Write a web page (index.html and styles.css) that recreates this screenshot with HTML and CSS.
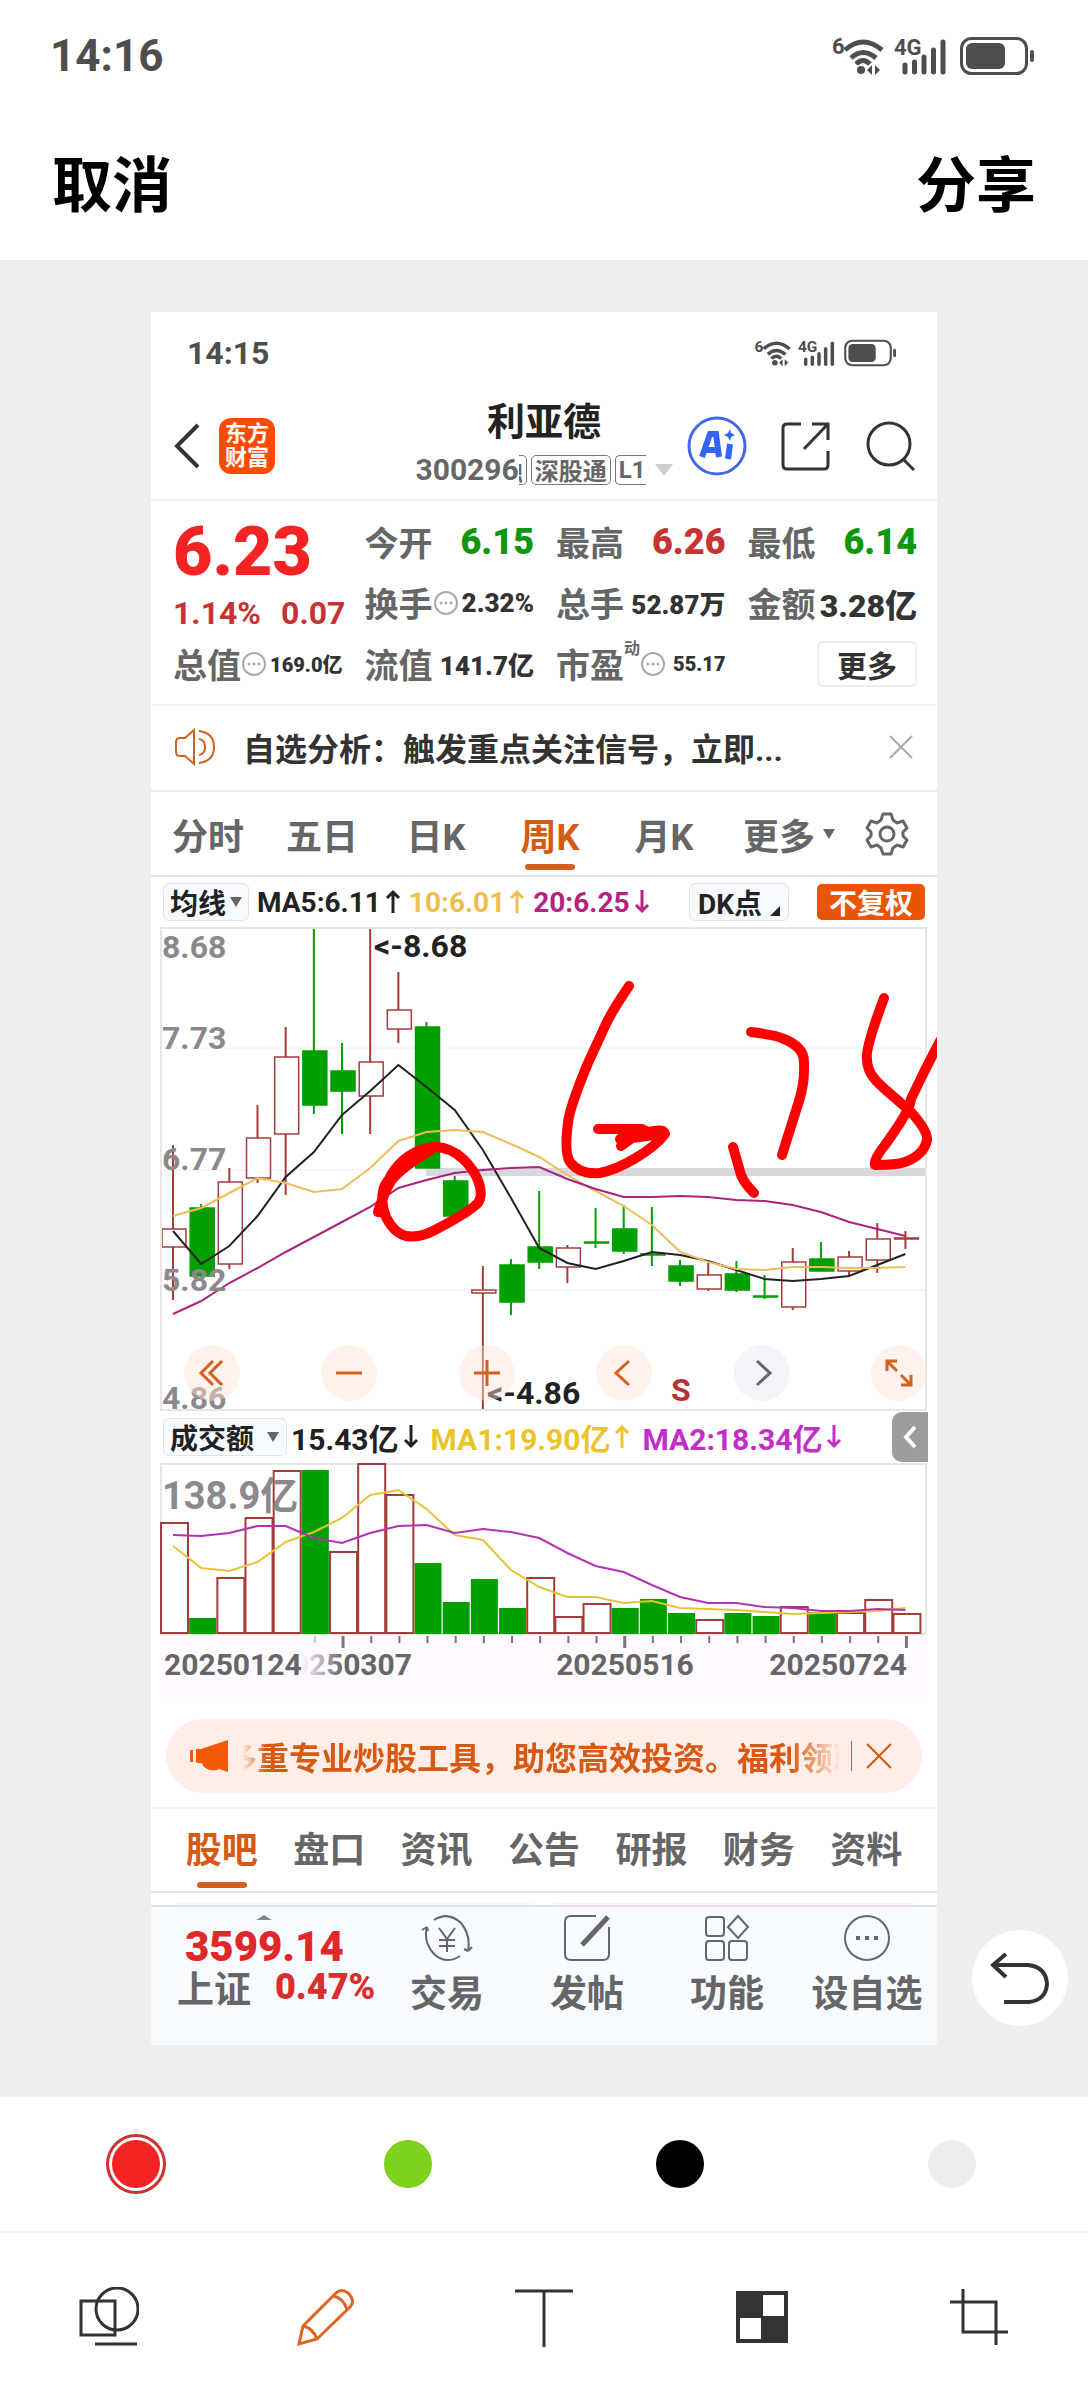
FILE: index.html
```html
<!DOCTYPE html>
<html lang="zh-CN">
<head>
  <meta charset="UTF-8">
  <meta name="viewport" content="width=device-width, initial-scale=1.0">
  <title>图片编辑</title>
  <link rel="stylesheet" href="styles.css">
</head>
<body>
  <svg class="sprite" aria-hidden="true">
    <symbol id="i-status" viewBox="0 0 204 40">
      <text x="0" y="18" font-size="22" font-weight="700" fill="currentColor">6</text>
      <g fill="none" stroke="currentColor" stroke-width="5">
        <path d="M13 14Q31 -2 50 14"/>
        <path d="M19 22Q31 11 44 22"/>
        <path d="M24 28Q31 21 38 28"/>
      </g>
      <circle cx="29" cy="34" r="4" fill="currentColor"/>
      <path d="M40 29v10l-5-5zM43 29v10l5-5z" fill="currentColor"/>
      <text x="62" y="19" font-size="22" font-weight="700" fill="currentColor">4G</text>
      <path d="M73 29v7M82.500 26v10M92 21v15M101.500 14v22M111 6v30" stroke="currentColor" stroke-width="5" stroke-linecap="round"/>
      <rect x="129.500" y="2.500" width="65" height="35" rx="10" fill="none" stroke="currentColor" stroke-width="3"/>
      <rect x="134" y="7" width="39" height="26" rx="6" fill="currentColor"/>
      <rect x="198" y="14" width="4" height="12" rx="2" fill="currentColor"/>
    </symbol>
    <symbol id="i-close" viewBox="0 0 24 24">
      <path d="M1 1l22 22M23 1L1 23" fill="none" stroke="currentColor" stroke-width="2"/>
    </symbol>
    <symbol id="i-more" viewBox="0 0 26 26">
      <circle cx="13" cy="13" r="11" fill="none" stroke="currentColor" stroke-width="2"/>
      <circle cx="8" cy="13" r="1.500" fill="currentColor"/>
      <circle cx="13" cy="13" r="1.500" fill="currentColor"/>
      <circle cx="18" cy="13" r="1.500" fill="currentColor"/>
    </symbol>
  </svg>

  <div class="status">
    <span>14:16</span>
    <svg class="status-icons"><use href="#i-status"/></svg>
  </div>
  <header class="topbar">
    <button>取消</button>
    <button>分享</button>
  </header>

  <main class="stage">
    <div class="shot">
      <div class="shot-status">
        <span>14:15</span>
        <svg class="status-icons"><use href="#i-status"/></svg>
      </div>

      <div class="nav">
        <div class="nav-left">
          <button aria-label="返回">
            <svg width="28" height="48" viewBox="0 0 28 48"><path d="M25 3L4 24l21 21" fill="none" stroke="#333" stroke-width="4"/></svg>
          </button>
          <div class="logo">东方<br>财富</div>
        </div>
        <div class="nav-title">
          <h1>利亚德</h1>
          <div class="code">
            <span>300296</span>
            <span class="tags"><i class="tag tag-cut"><b>融</b></i><i class="tag">深股通</i><i class="tag tag-end">L1</i></span>
            <svg width="18" height="12" viewBox="0 0 18 12"><path d="M0 0h18l-9 12z" fill="#ccc"/></svg>
          </div>
        </div>
        <div class="nav-right">
          <button aria-label="AI">
            <svg width="60" height="60" viewBox="0 0 60 60">
              <circle cx="30" cy="30" r="28" fill="#fff" stroke="#4169e6" stroke-width="3"/>
              <path d="M15 41l8-23h6l3 23M19 34h12" fill="none" stroke="#3364f5" stroke-width="6"/>
              <path d="M43 28l-2 15" stroke="#3364f5" stroke-width="6"/>
              <path d="M43 13l1 4 4 2-4 2-1 4-2-4-4-2 4-2z" fill="#3364f5"/>
            </svg>
          </button>
          <button aria-label="分享">
            <svg width="50" height="50" viewBox="0 0 50 50">
              <g fill="none" stroke="#333" stroke-width="3">
                <path d="M20 3H6q-4 0-4 4v37q0 4 4 4h37q4 0 4-4V30"/>
                <path d="M31 3h16v16M46 4L23 28"/>
              </g>
            </svg>
          </button>
          <button aria-label="搜索">
            <svg width="50" height="50" viewBox="0 0 50 50"><g fill="none" stroke="#333" stroke-width="3"><circle cx="24" cy="23" r="21"/><path d="M38 38l11 11"/></g></svg>
          </button>
        </div>
      </div>

      <section class="quote">
        <div class="price">
          <strong>6.23</strong>
          <div><span>1.14%</span><span>0.07</span></div>
        </div>
        <div class="cell"><span>今开</span><b class="v-l green">6.15</b></div>
        <div class="cell"><span>最高</span><b class="v-l red">6.26</b></div>
        <div class="cell"><span>最低</span><b class="v-l green">6.14</b></div>
        <div class="cell"><span>换手</span><svg class="info"><use href="#i-more"/></svg><b class="v-s">2.32%</b></div>
        <div class="cell"><span>总手</span><b class="v-s">52.87万</b></div>
        <div class="cell"><span>金额</span><b class="v-m">3.28亿</b></div>
        <div class="cell"><span>总值</span><svg class="info"><use href="#i-more"/></svg><b class="v-xs">169.0亿</b></div>
        <div class="cell"><span>流值</span><b class="v-s">141.7亿</b></div>
        <div class="cell"><span>市盈</span><sup>动</sup><svg class="info"><use href="#i-more"/></svg><b class="v-xs">55.17</b></div>
        <div class="cell"><button class="more-btn">更多</button></div>
      </section>

      <div class="notice">
        <svg width="42" height="38" viewBox="0 0 42 38">
          <g fill="none" stroke="#d2601f" stroke-width="2">
            <path d="M19 2v34l-9-8H5q-4 0-4-4V14q0-4 4-4h5z"/>
            <path d="M24 11q6 1 6 8t-6 8M24 3q15 2 15 16T24 35"/>
          </g>
        </svg>
        <p>自选分析：触发重点关注信号，立即...</p>
        <button class="grey" aria-label="关闭"><svg width="24" height="24"><use href="#i-close"/></svg></button>
      </div>

      <nav class="periods">
        <button>分时</button>
        <button>五日</button>
        <button>日K</button>
        <button class="active">周K</button>
        <button>月K</button>
        <button class="wide">更多<svg width="12" height="12" viewBox="0 0 12 12"><path d="M0 1h12L6 11z" fill="#666"/></svg></button>
        <button class="gear" aria-label="设置">
          <svg width="44" height="44" viewBox="0 0 44 44">
            <g fill="none" stroke="#666" stroke-width="3" stroke-linejoin="round">
              <path d="M18 2h8l2 6 4 3 6-2 4 7-4 4v4l4 4-4 7-6-2-4 3-2 6h-8l-2-6-4-3-6 2-4-7 4-4v-4l-4-4 4-7 6 2 4-3z"/>
              <circle cx="22" cy="22" r="7"/>
            </g>
          </svg>
        </button>
      </nav>

      <div class="ma-row">
        <button class="pill">均线<svg width="12" height="12" viewBox="0 0 12 12"><path d="M0 1h12L6 11z" fill="#666"/></svg></button>
        <span>MA5:6.11<svg class="arrow"><path d="M8 24V3M2 9l6-6 6 6"/></svg></span>
        <span class="yellow">10:6.01<svg class="arrow"><path d="M8 24V3M2 9l6-6 6 6"/></svg></span>
        <span class="magenta">20:6.25<svg class="arrow"><path d="M8 1v21M2 16l6 6 6-6"/></svg></span>
        <button class="pill dk">DK点<svg width="10" height="10" viewBox="0 0 10 10"><path d="M10 0v10H0z" fill="#222"/></svg></button>
        <button class="adjust">不复权</button>
      </div>

      <div class="chart">
        <svg id="kline" viewBox="0 0 767 484"></svg>
        <div class="chart-tools">
          <button aria-label="最早"><svg width="28" height="28" viewBox="0 0 28 28"><path d="M15 2L3 14l12 12M24 2L12 14l12 12"/></svg></button>
          <button aria-label="缩小"><svg width="28" height="28" viewBox="0 0 28 28"><path d="M1 14h26"/></svg></button>
          <button aria-label="放大"><svg width="28" height="28" viewBox="0 0 28 28"><path d="M1 14h26M14 1v26"/></svg></button>
          <button aria-label="向左"><svg width="28" height="28" viewBox="0 0 28 28"><path d="M19 2L6 14l13 12"/></svg></button>
          <button class="off" aria-label="向右"><svg width="28" height="28" viewBox="0 0 28 28"><path d="M9 2l13 12L9 26"/></svg></button>
          <button aria-label="全屏"><svg width="28" height="28" viewBox="0 0 28 28"><path d="M12 2H2v10M2 2l10 10M16 26h10V16M26 26L16 16"/></svg></button>
        </div>
        <!-- pen strokes -->
        <svg class="ink" viewBox="0 0 777 484">
          <path d="M218 285Q223 268 231 254Q242 240 270 224"/>
          <path d="M222 286Q220 266 231 248Q246 224 273 220C298 219 314 242 319 256Q323 269 318 276Q308 286 273 304Q259 311 246 309Q234 306 226 290Q219 272 225 258Q236 240 262 226"/>
          <path d="M469 59Q452 84 446 97L428 136Q409 182 408 196Q404 226 410 235Q420 248 440 246C460 242 492 224 505 207Q504 201 488 205L482 202H438M482 202L460 212L494 208L472 211L461 219"/>
          <path d="M591 105Q616 108 624 112Q644 120 644 135Q645 155 639 174L622 228"/>
          <path d="M573 220L581 248Q584 256 594 266"/>
          <path d="M724 71Q705 122 707 132C707 152 724 160 751 185Q768 204 767 213Q764 228 745 235Q737 238 715 238Q713 233 725 218Q751 182 751 172Q765 142 780 114"/>
        </svg>
      </div>

      <div class="vol-row">
        <button class="pill">成交额<svg width="14" height="12" viewBox="0 0 12 12"><path d="M0 1h12L6 11z" fill="#666"/></svg></button>
        <span>15.43亿<svg class="arrow"><path d="M8 1v21M2 16l6 6 6-6"/></svg></span>
        <span class="gold">MA1:19.90亿<svg class="arrow"><path d="M8 24V3M2 9l6-6 6 6"/></svg></span>
        <span class="purple">MA2:18.34亿<svg class="arrow"><path d="M8 1v21M2 16l6 6 6-6"/></svg></span>
        <button class="side" aria-label="展开"><svg width="16" height="24" viewBox="0 0 16 24"><path d="M13 2L4 12l9 10" fill="none" stroke="#fff" stroke-width="4"/></svg></button>
      </div>

      <div class="chart">
        <svg id="volume" viewBox="0 0 767 240"></svg>
      </div>

      <div class="promo">
        <svg width="38" height="34" viewBox="0 0 38 34"><path d="M0 11h3v12H0zM6 10h5L38 1v32l-9-3q-2 2-9 1-7-2-8-7H8q-2 0-2-2z" fill="#f05a06"/></svg>
        <p><span>多重专业炒股工具，助您高效投资。福利领取</span></p>
        <button aria-label="关闭"><svg width="26" height="26"><use href="#i-close"/></svg></button>
      </div>

      <nav class="tabs">
        <a href="#" class="active">股吧</a>
        <a href="#">盘口</a>
        <a href="#">资讯</a>
        <a href="#">公告</a>
        <a href="#">研报</a>
        <a href="#">财务</a>
        <a href="#">资料</a>
      </nav>
      <div class="peek"><i></i><i></i></div>

      <footer class="bottom">
        <div class="index">
          <svg width="16" height="5" viewBox="0 0 16 5"><path d="M8 0l8 5H0z" fill="#888"/></svg>
          <strong>3599.14</strong>
          <div><span>上证</span><b>0.47%</b></div>
        </div>
        <button>
          <svg width="54" height="50" viewBox="0 0 54 50"><path d="M14 7Q28-2 41 10q10 12 7 28M48 38l4-4M48 38l-4-2M40 43Q26 52 14 41Q3 29 7 14M7 14l-5 3M7 14l1 4M19 15l8 11 8-11M27 26v13M19 27h16M19 33h16"/></svg>
          交易
        </button>
        <button>
          <svg width="54" height="50" viewBox="0 0 54 50"><path d="M36 3H11q-6 0-6 6v32q0 6 6 6h32q6 0 6-6V14"/><path d="M48 4L22 32" stroke-width="5"/></svg>
          发帖
        </button>
        <button>
          <svg width="54" height="50" viewBox="0 0 54 50"><rect x="6" y="4" width="18" height="19" rx="3"/><rect x="6" y="28" width="18" height="19" rx="3"/><rect x="29" y="28" width="18" height="19" rx="3"/><path d="M38 3l10 11-10 11-10-11z"/></svg>
          功能
        </button>
        <button>
          <svg width="54" height="50" viewBox="0 0 54 50"><circle cx="27" cy="25" r="22"/><path d="M16 25h4M25 25h4M34 25h4" stroke-width="4"/></svg>
          设自选
        </button>
      </footer>
    </div>

    <button class="undo" aria-label="撤销">
      <svg width="60" height="54" viewBox="0 0 60 54"><path d="M16 3L3 14l13 12M4 14h34q18 2 19 19-1 16-18 18H14" fill="none" stroke="#333" stroke-width="4"/></svg>
    </button>
  </main>

  <div class="palette">
    <label><input type="radio" name="color" class="c-red" aria-label="红色" checked></label>
    <label><input type="radio" name="color" class="c-green" aria-label="绿色"></label>
    <label><input type="radio" name="color" class="c-black" aria-label="黑色"></label>
    <label><input type="radio" name="color" class="c-grey" aria-label="灰色"></label>
  </div>

  <div class="tools">
    <button aria-label="形状"><svg width="60" height="60" viewBox="0 0 60 60"><path d="M2 14h34v34H2zM16 57h42"/><circle cx="38" cy="22" r="21"/></svg></button>
    <button class="active" aria-label="画笔"><svg width="60" height="60" viewBox="0 0 60 60"><path d="M3 57l4-18L40 6q5-5 12 0 8 8 2 14L21 52zM7 39q10 2 14 13M37 9q11 2 14 14"/></svg></button>
    <button aria-label="文字"><svg width="60" height="60" viewBox="0 0 60 60"><path d="M1 4h58M30 4v56"/></svg></button>
    <button aria-label="马赛克"><svg width="52" height="52" viewBox="0 0 52 52"><rect x="1" y="1" width="50" height="50" fill="#333"/><path d="M27 4h21v21H27zM4 27h21v21H4z" fill="#fff" stroke="none"/></svg></button>
    <button aria-label="裁剪"><svg width="58" height="56" viewBox="0 0 58 56"><path d="M0 13h46v43M13 0v43h45"/></svg></button>
  </div>

  <script src="app.js"></script>
</body>
</html>
```
FILE: styles.css
```css
* {
  box-sizing: border-box;
}

body {
  margin: 0;
  background: #fff;
  color: #222;
  font-family: Roboto, "Noto Sans CJK SC", sans-serif;
  font-weight: 700;
}

button {
  display: flex;
  align-items: center;
  justify-content: center;
  padding: 0;
  border: none;
  background: none;
  color: inherit;
  font: inherit;
  cursor: pointer;
}

a {
  color: inherit;
  text-decoration: none;
}

svg {
  display: block;
  flex: none;
}

.sprite {
  display: none;
}

/* page header */
.status {
  display: flex;
  align-items: center;
  justify-content: space-between;
  height: 112px;
  padding: 0 52px 0 50px;
  color: #4e4e4e;
  font-size: 44px;
}

.status-icons {
  width: 204px;
  height: 40px;
}

.topbar {
  display: flex;
  align-items: center;
  justify-content: space-between;
  height: 148px;
  padding: 0 52px 12px;
  color: #000;
  font-size: 60px;
}

.stage {
  position: relative;
  padding: 52px 151px;
  background: #eee;
}

.shot {
  background: #fff;
  overflow: hidden;
}

.shot-status {
  display: flex;
  align-items: center;
  justify-content: space-between;
  height: 82px;
  padding: 0 38px 0 36px;
  color: #4e4e4a;
  font-size: 32px;
}

.shot-status .status-icons {
  width: 146px;
  height: 28px;
}

/* stock title */
.nav {
  display: grid;
  grid-template-columns: 1fr auto 1fr;
  align-items: center;
  height: 107px;
  padding: 0 22px 2px;
  border-bottom: 2px solid #eee;
}

.nav-left,
.nav-right {
  display: flex;
  align-items: center;
}

.nav-left {
  gap: 18px;
}

.nav-right {
  gap: 34px;
  justify-content: flex-end;
}

.logo {
  padding: 4px 6px;
  border-radius: 12px;
  background: #ff4a00;
  color: #fff;
  font-size: 22px;
  line-height: 24px;
}

.nav-title h1 {
  margin: 0;
  font-size: 38px;
  line-height: 48px;
  text-align: center;
}

.code {
  display: flex;
  align-items: center;
  height: 48px;
  color: #666;
  font-size: 30px;
}

.code svg {
  margin-left: 9px;
}

.tags {
  display: flex;
  gap: 4px;
}

.tag {
  display: flex;
  align-items: center;
  height: 30px;
  padding: 0 3px;
  border: 1px solid #777;
  border-radius: 5px;
  font-size: 24px;
  font-style: normal;
}

.tag-cut {
  justify-content: flex-end;
  width: 8px;
  border-left: none;
  border-radius: 0 5px 5px 0;
  overflow: hidden;
}

.tag-end {
  padding-right: 0;
  border-right: none;
  border-radius: 5px 0 0 5px;
}

/* quote numbers */
.quote {
  display: grid;
  grid-template-columns: repeat(4, minmax(0, 1fr));
  grid-template-rows: repeat(3, 61px);
  column-gap: 22px;
  padding: 10px 20px 10px 22px;
  border-bottom: 2px solid #f5f5f5;
}

.price {
  grid-row: span 2;
  color: #c83232;
  font-size: 32px;
}

.price strong {
  display: block;
  color: #f52323;
  font-size: 68px;
  line-height: 82px;
}

.price div {
  display: flex;
  gap: 20px;
  line-height: 40px;
}

.cell {
  display: flex;
  align-items: center;
  color: #666;
  font-size: 34px;
  white-space: nowrap;
}

.cell b {
  margin-left: auto;
  color: #333;
}

.cell sup {
  align-self: flex-start;
  font-size: 16px;
  line-height: 32px;
}

.cell .v-l { font-size: 36px; }
.cell .v-m { font-size: 32px; }
.cell .v-s { font-size: 26px; }
.cell .v-xs { font-size: 20px; }
.cell .red { color: #c83232; }
.cell .green { color: #0f960f; }

.info {
  width: 26px;
  height: 26px;
  color: #aaa;
}

.more-btn {
  width: 100px;
  height: 46px;
  margin-left: auto;
  border: 2px solid #eee;
  border-radius: 6px;
  color: #333;
  font-size: 30px;
}

.notice {
  display: flex;
  align-items: center;
  height: 86px;
  padding: 0 24px 2px;
  border-bottom: 2px solid #eaeaea;
  color: #333;
  font-size: 32px;
}

.notice p {
  flex: 1;
  margin: 0 0 0 26px;
}

.notice .grey {
  color: #aaa;
}

.periods {
  display: flex;
  height: 85px;
  border-bottom: 2px solid #e4e4e4;
  color: #666;
  font-size: 36px;
}

.periods button {
  position: relative;
  flex: 1;
}

.periods .wide {
  flex: 0 0 136px;
  gap: 8px;
}

.periods .gear {
  flex: 0 0 80px;
  padding-right: 20px;
}

.active {
  position: relative;
  color: #d75a14;
}

.periods .active::after,
.tabs .active::after {
  content: "";
  position: absolute;
  bottom: 5px;
  left: 50%;
  width: 50px;
  height: 6px;
  margin-left: -25px;
  border-radius: 3px;
  background: #d2601f;
}

/* indicator rows */
.ma-row,
.vol-row {
  display: flex;
  align-items: center;
  font-size: 28px;
  white-space: nowrap;
}

.ma-row {
  gap: 8px;
  height: 50px;
  padding: 0 12px;
}

.vol-row {
  height: 52px;
  margin: 0 9px;
  padding-left: 3px;
}

.ma-row span,
.vol-row span {
  display: flex;
  align-items: center;
}

.vol-row span {
  margin-left: 4px;
  font-size: 30px;
}

.vol-row span + span {
  margin-left: 12px;
}

.arrow {
  width: 16px;
  height: 26px;
  margin-left: 4px;
  fill: none;
  stroke: currentColor;
  stroke-width: 3;
}

.pill {
  gap: 4px;
  height: 38px;
  padding: 0 6px;
  border: 1px solid #e2e2ea;
  border-radius: 6px;
  background: #f6faff;
}

.vol-row .pill {
  gap: 12px;
}

.dk {
  margin-left: auto;
  padding: 0 8px;
  gap: 8px;
}

.dk svg {
  align-self: flex-end;
  margin-bottom: 4px;
}

.adjust {
  height: 36px;
  margin-left: 20px;
  padding: 0 12px;
  border-radius: 5px;
  background: #ea5504;
  color: #fff;
}

.yellow { color: #f0be50; }
.magenta { color: #b4237d; }
.gold { color: #ebc328; }
.purple { color: #c32dc8; }

.side {
  width: 36px;
  height: 50px;
  margin-left: auto;
  border-radius: 10px 0 0 10px;
  background: #9e9b9f;
}

/* charts */
.chart {
  position: relative;
  margin: 0 10px 0 9px;
}

.chart > svg {
  width: 100%;
}

.chart text {
  font-size: 32px;
}

.chart .date {
  font-size: 30px;
  fill: #666;
}

.chart .vol-max {
  font-size: 38px;
}

.chart .scale {
  fill: #8b898b;
}

.chart-tools {
  position: absolute;
  right: 0;
  bottom: 10px;
  left: 24px;
  display: flex;
  justify-content: space-between;
}

.chart-tools button {
  width: 56px;
  height: 56px;
  border-radius: 50%;
  background: rgba(255, 225, 212, 0.45);
  color: #d2601f;
}

.chart-tools .off {
  background: rgba(235, 230, 242, 0.5);
  color: #666;
}

.chart-tools svg {
  fill: none;
  stroke: currentColor;
  stroke-width: 3;
}

.chart .ink {
  position: absolute;
  top: 0;
  left: 0;
  width: calc(100% + 10px);
  fill: none;
  stroke: #f00;
  stroke-width: 10;
  stroke-linecap: round;
  stroke-linejoin: round;
  pointer-events: none;
}

.promo {
  display: flex;
  align-items: center;
  height: 74px;
  margin: 16px 15px 14px;
  padding: 0 30px 0 24px;
  border-radius: 37px;
  background: #ffeee7;
  color: #d75a14;
  font-size: 32px;
}

.promo p {
  display: flex;
  flex: 1;
  justify-content: flex-end;
  margin: 0 10px 0 14px;
  overflow: hidden;
  white-space: nowrap;
  -webkit-mask-image: linear-gradient(90deg, transparent, #000 24px, #000 calc(100% - 50px), transparent);
  mask-image: linear-gradient(90deg, transparent, #000 24px, #000 calc(100% - 50px), transparent);
}

.promo p span {
  margin-right: -24px;
}

.promo button {
  height: 30px;
  padding-left: 14px;
  border-left: 1px solid #d75a14;
}

.tabs {
  display: grid;
  grid-template-columns: repeat(7, 1fr);
  height: 86px;
  padding: 0 17px;
  border-top: 2px solid #eee;
  border-bottom: 2px solid #e4e4e4;
  color: #666;
  font-size: 36px;
  text-align: center;
  line-height: 84px;
}

.peek {
  display: flex;
  align-items: flex-end;
  gap: 22px;
  height: 12px;
  padding: 0 24px;
}

.peek i {
  flex: 1;
  height: 2px;
  background: #f6f6fc;
}

.peek i + i {
  background: #fdf0f0;
}

.bottom {
  display: flex;
  height: 140px;
  border-top: 2px solid #e0e2e6;
  background: #f7faff;
  color: #666;
  font-size: 37px;
}

.bottom button {
  flex: 1;
  flex-direction: column;
  justify-content: flex-start;
  gap: 4px;
  padding-top: 6px;
  line-height: 56px;
  white-space: nowrap;
}

.bottom button svg {
  fill: none;
  stroke: #666;
  stroke-width: 2;
}

.index {
  flex: 0 0 226px;
  padding: 8px 0 0 26px;
}

.index svg {
  margin-left: 79px;
}

.index strong {
  display: block;
  padding: 2px 0 0 8px;
  color: #e12828;
  font-size: 42px;
  line-height: 50px;
}

.index div {
  display: flex;
  align-items: center;
  gap: 24px;
  height: 30px;
}

.index b {
  color: #dc2d2d;
  font-size: 36px;
}

.undo {
  position: absolute;
  right: 20px;
  bottom: 71px;
  width: 96px;
  height: 96px;
  border-radius: 50%;
  background: #fff;
}

/* editor controls */
.palette {
  display: flex;
  height: 136px;
  border-bottom: 2px solid #eee;
}

.palette label {
  display: flex;
  flex: 1;
  align-items: center;
  justify-content: center;
}

.palette input {
  width: 48px;
  height: 48px;
  margin: 0;
  border-radius: 50%;
  appearance: none;
  cursor: pointer;
}

.palette input:checked {
  box-shadow: 0 0 0 3px #fff, 0 0 0 6px #cd3232;
}

.c-red { background: #f52323; }
.c-green { background: #7ed321; }
.c-black { background: #000; }
.c-grey { background: #eee; }

.tools {
  display: flex;
  height: 167px;
  color: #333;
}

.tools button {
  flex: 1;
}

.tools svg {
  fill: none;
  stroke: currentColor;
  stroke-width: 3;
}

.tools .active {
  color: #e0641e;
}
```
FILE: app.js
```js
const RED = '#a53c3c';
const GREEN = '#00a000';
const STEP = 28.17;

// up/down, high, body top, body bottom, low
const candles = [
  ['r', 218, 302, 320, 373], ['g', 277, 281, 349, 349], ['r', 241, 255, 337, 342],
  ['r', 178, 211, 251, 256], ['r', 100, 130, 207, 268], ['g', 1, 124, 178, 187],
  ['g', 116, 144, 164, 207], ['r', 1, 135, 169, 207], ['r', 45, 83, 102, 116],
  ['g', 95, 100, 241, 241], ['g', 249, 254, 289, 289], ['r', 339, 363, 366, 484],
  ['g', 332, 338, 375, 388], ['g', 264, 320, 335, 342], ['r', 318, 321, 340, 356],
  ['g', 281, 315, 316, 321], ['g', 278, 302, 324, 327], ['g', 280, 327, 328, 339],
  ['g', 333, 339, 354, 359], ['r', 336, 348, 362, 364], ['g', 334, 347, 363, 365],
  ['g', 348, 369, 370, 372], ['r', 321, 335, 380, 383], ['g', 315, 332, 344, 344],
  ['r', 324, 330, 344, 350], ['r', 296, 312, 333, 346], ['r', 304, 311, 312, 322]
];
const ma5 = [304, 337, 319, 289, 250, 225, 188, 164, 138, 160, 183, 223, 271, 321, 336, 342, 334, 325, 328, 334, 343, 352, 354, 352, 349, 338, 327];
const ma10 = [289, 281, 266, 251, 256, 265, 262, 241, 214, 205, 203, 205, 217, 230, 248, 264, 279, 298, 325, 335, 342, 343, 340, 340, 341, 341, 340];
const ma20 = [387, 374, 356, 341, 325, 310, 295, 280, 261, 253, 246, 243, 241, 240, 252, 262, 270, 270, 269, 270, 273, 274, 278, 285, 295, 302, 309];

const volTop = [60, 155, 115, 55, 8, 7, 89, 1, 32, 100, 139, 116, 145, 115, 154, 141, 145, 136, 150, 157, 150, 153, 144, 149, 150, 137, 151];
const volColor = 'rgrrrgrrrggggrrrgggrggrgrrr';
const vma1 = [83, 105, 108, 99, 79, 69, 55, 32, 27, 46, 72, 77, 107, 124, 134, 134, 140, 138, 145, 146, 147, 149, 151, 150, 149, 148, 145];
const vma2 = [72, 73, 70, 63, 63, 75, 80, 70, 63, 62, 70, 66, 69, 75, 90, 103, 109, 122, 134, 140, 140, 144, 145, 148, 148, 146, 147];

function centerX(i) {
  return 13 + STEP * i;
}

function line(values, color) {
  const points = values.map((y, i) => centerX(i).toFixed(1) + ',' + y).join(' ');
  return `<polyline points="${points}" fill="none" stroke="${color}" stroke-width="2"/>`;
}

function drawKline() {
  let out = '<rect x="266" y="241" width="501" height="8" fill="#d7d7de"/>';
  [121, 243, 363].forEach(y => {
    out += `<path d="M0 ${y}H767" stroke="#e4e4e4" stroke-dasharray="2 2"/>`;
  });
  candles.forEach(([type, high, top, bottom, low], i) => {
    const x = centerX(i);
    const color = type === 'r' ? RED : GREEN;
    const fill = type === 'r' ? '#fff' : GREEN;
    out += `<path d="M${x} ${high}V${top}M${x} ${bottom}V${low}" stroke="${color}" stroke-width="2"/>`;
    out += `<rect x="${x - 11}" y="${top}" width="24" height="${bottom - top}" fill="${fill}" stroke="${color}" stroke-width="1.500"/>`;
  });
  out += line(ma5, '#222') + line(ma10, '#ebbe5a') + line(ma20, '#aa237d');
  [['8.68', 31], ['7.73', 122], ['6.77', 243], ['5.82', 364], ['4.86', 482]].forEach(([label, y]) => {
    out += `<text class="scale" x="2" y="${y}">${label}</text>`;
  });
  out += '<text x="214" y="30" fill="#222">&lt;-8.68</text>';
  out += '<text x="327" y="477" fill="#222">&lt;-4.86</text>';
  out += '<text x="511" y="474" fill="#b93232">S</text>';
  out += '<path d="M1 484V1H766V484M0 483H767" fill="none" stroke="#e6e6e6" stroke-width="2"/>';
  document.getElementById('kline').innerHTML = out;
}

function drawVolume() {
  let out = '<defs><linearGradient id="fade"><stop offset=".2" stop-color="#666" stop-opacity="0"/><stop offset=".5" stop-color="#666"/></linearGradient></defs>';
  out += '<rect y="172" width="767" height="68" fill="#fdf9ff"/>';
  out += '<path d="M1 170V1H766V171H0" fill="none" stroke="#e6e6e6" stroke-width="2"/>';
  volTop.forEach((y, i) => {
    const x = STEP * i;
    if (volColor[i] === 'r') {
      out += `<rect x="${x + 1}" y="${y}" width="27" height="${170 - y}" fill="#fff" stroke="${RED}" stroke-width="2"/>`;
    } else {
      out += `<rect x="${x + 1}" y="${y}" width="27" height="${171 - y}" fill="${GREEN}"/>`;
    }
  });
  out += line(vma1, '#e6c337') + line(vma2, '#b432b4');
  for (let i = 5; i < 27; i++) {
    const big = i % 10 === 6;
    out += `<path d="M${centerX(i) + 1} 173v${big ? 12 : 7}" stroke="${i === 5 ? '#ccc' : '#777'}" stroke-width="${big ? 3 : 2}"/>`;
  }
  out += '<text class="scale vol-max" x="2" y="46">138.9亿</text>';
  out += '<text class="date" x="4" y="212">20250124</text>';
  out += '<text class="date" x="252" y="212" text-anchor="end" style="fill:url(#fade)">20250307</text>';
  out += '<text class="date" x="465" y="212" text-anchor="middle">20250516</text>';
  out += '<text class="date" x="747" y="212" text-anchor="end">20250724</text>';
  document.getElementById('volume').innerHTML = out;
}

drawKline();
drawVolume();
```
